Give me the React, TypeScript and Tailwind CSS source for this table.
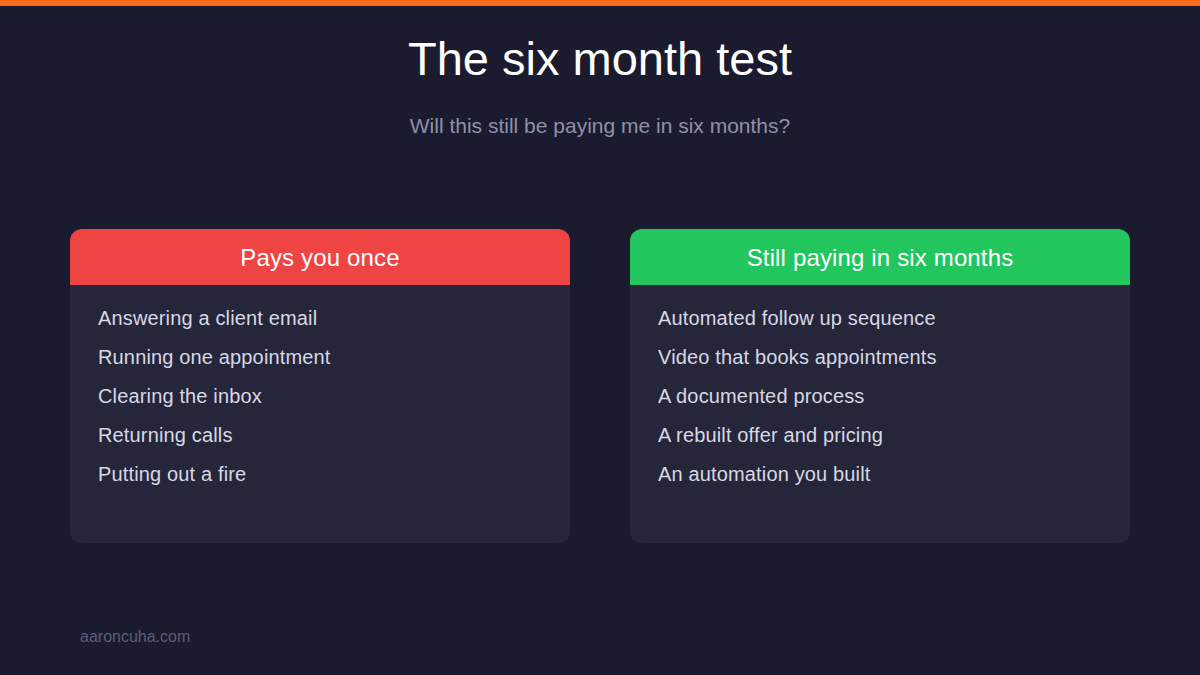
const payOnce = [
  "Answering a client email",
  "Running one appointment",
  "Clearing the inbox",
  "Returning calls",
  "Putting out a fire",
];

const payLater = [
  "Automated follow up sequence",
  "Video that books appointments",
  "A documented process",
  "A rebuilt offer and pricing",
  "An automation you built",
];

function Card({ title, items, head }: { title: string; items: string[]; head: string }) {
  return (
    <div className="w-[500px] h-[314px] rounded-[12px] overflow-hidden bg-[#25263a] flex flex-col">
      <div className={`h-[56px] pt-[2px] flex items-center justify-center text-white text-[24px] tracking-[0.15px] leading-none ${head}`}>
        {title}
      </div>
      <ul className="pt-[19px] px-[28px] flex flex-col gap-[11px]">
        {items.map((item) => (
          <li key={item} className="text-[20px] leading-[28px] tracking-[0.15px] text-[#d8d8e4]">
            {item}
          </li>
        ))}
      </ul>
    </div>
  );
}

export default function App() {
  return (
    <div
      className="w-[1200px] h-[675px] bg-[#1a1b2e] flex flex-col overflow-hidden"
      style={{ fontFamily: '"Liberation Sans", Arial, sans-serif' }}
    >
      <div className="h-[6px] bg-[#ff6b1f]" />
      <h1 className="mt-[29px] text-center text-white text-[47px] leading-[47px]">The six month test</h1>
      <p className="mt-[33px] text-center text-[#8f91aa] text-[21px] leading-[21px]">
        Will this still be paying me in six months?
      </p>
      <div className="mt-[93px] px-[70px] flex gap-[60px]">
        <Card title="Pays you once" items={payOnce} head="bg-[#ef4444]" />
        <Card title="Still paying in six months" items={payLater} head="bg-[#22c55e]" />
      </div>
      <div className="mt-[86px] pl-[80px] text-[16px] leading-[16px] text-[#5b5d79]">aaroncuha.com</div>
    </div>
  );
}
